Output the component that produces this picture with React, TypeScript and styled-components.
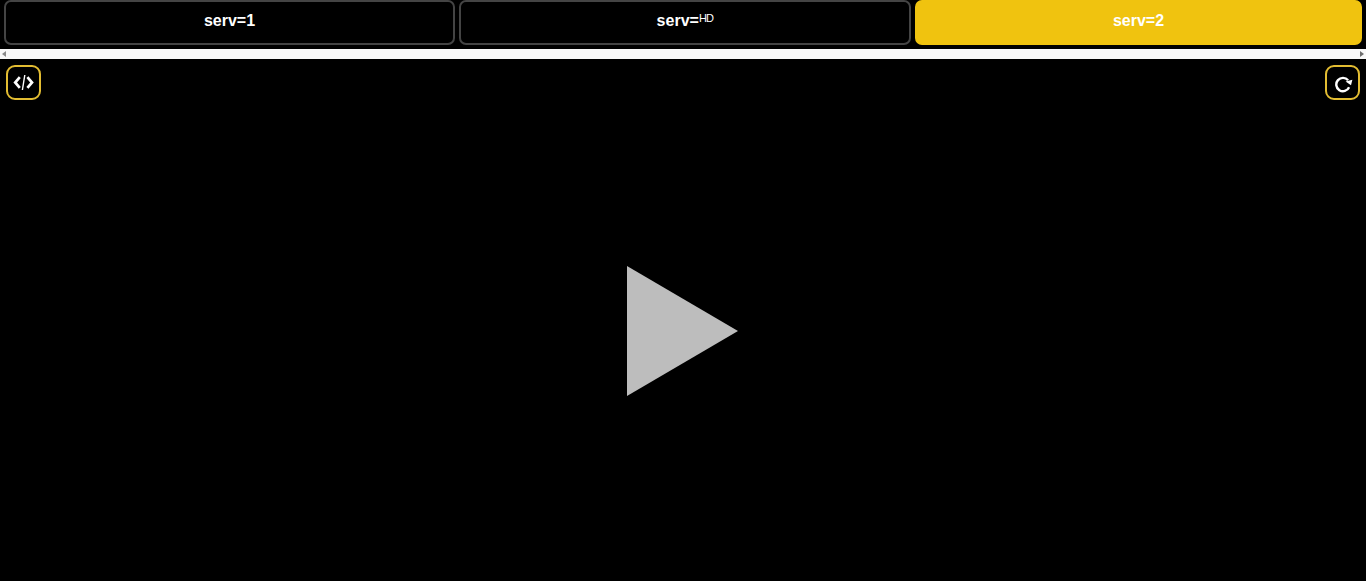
import React from "react";
import styled, { createGlobalStyle } from "styled-components";

const Global = createGlobalStyle`
  html, body { margin: 0; padding: 0; height: 100%; background: #000; overflow: hidden; }
  #root { height: 100%; }
`;

const Page = styled.div`
  display: flex;
  flex-direction: column;
  height: 581px;
  width: 1366px;
  background: #000;
  font-family: "Liberation Sans", Arial, sans-serif;
`;

const TabBar = styled.nav`
  display: grid;
  grid-template-columns: 451px 452px 447px;
  column-gap: 4px;
  padding: 0 4px;
  height: 45px;
  box-sizing: border-box;
  margin-bottom: 4px;
`;

const Tab = styled.button<{ $active?: boolean }>`
  display: flex;
  align-items: center;
  justify-content: center;
  height: 45px;
  padding: 0 0 3px;
  box-sizing: border-box;
  border: 2px solid ${(p) => (p.$active ? "#f0c30f" : "#444444")};
  border-radius: 7px;
  background: ${(p) => (p.$active ? "#f0c30f" : "#000")};
  color: #fff;
  font: bold 16px "Liberation Sans", Arial, sans-serif;
`;

const Sup = styled.sup`
  font-size: 11px;
  font-weight: 400;
  line-height: 0;
  position: relative;
  top: -3px;
  letter-spacing: -0.7px;
  align-self: center;
`;

const ScrollTrack = styled.div`
  display: flex;
  align-items: center;
  justify-content: space-between;
  height: 10px;
  padding: 0 2px;
  box-sizing: border-box;
  background: #f9f9f9;
`;

const Arrow = styled.span<{ $dir: "left" | "right" }>`
  width: 0;
  height: 0;
  border-top: 3.5px solid transparent;
  border-bottom: 3.5px solid transparent;
  ${(p) =>
    p.$dir === "left"
      ? "border-right: 4px solid #8a8a8a;"
      : "border-left: 4px solid #6e6e6e;"}
`;

const Player = styled.main`
  position: relative;
  flex: 1;
  display: grid;
  place-items: center;
  padding-top: 22px;
  box-sizing: border-box;
  background: #000;
`;

const PlayIcon = styled.svg`
  display: block;
  width: 111px;
  height: 130px;
  transform: translateX(-1px);
`;

const IconButton = styled.button<{ $side: "left" | "right" }>`
  position: absolute;
  top: 6px;
  ${(p) => (p.$side === "left" ? "left: 6px;" : "right: 6px;")}
  width: 35px;
  height: 35px;
  padding: 0;
  display: flex;
  align-items: center;
  justify-content: center;
  box-sizing: border-box;
  background: #000;
  border: 2px solid #e3bd32;
  border-radius: 9px;
`;

export default function App() {
  return (
    <Page>
      <Global />
      <TabBar>
        <Tab>serv=1</Tab>
        <Tab>
          serv=<Sup>HD</Sup>
        </Tab>
        <Tab $active>serv=2</Tab>
      </TabBar>
      <ScrollTrack>
        <Arrow $dir="left" />
        <Arrow $dir="right" />
      </ScrollTrack>
      <Player>
        <IconButton $side="left" aria-label="embed">
          <svg width="21" height="17" viewBox="0 0 21 17" fill="none" stroke="#fff" strokeWidth="2.7">
            <path d="M6.8 3.2 L2.2 8.5 L6.8 13.8" />
            <path d="M14.4 3.2 L19 8.5 L14.4 13.8" />
            <path d="M11.8 1 L9.4 16" strokeWidth="1.4" />
          </svg>
        </IconButton>
        <IconButton $side="right" aria-label="reload">
          <svg width="20" height="20" viewBox="0 0 20 20" fill="none">
            <path d="M16.1 14.3 A6.7 6.7 0 1 1 15.1 7.2" stroke="#fff" strokeWidth="2.4" />
            <path d="M12.6 8.4 L19.4 6.8 L18 12.2 Z" fill="#fff" />
          </svg>
        </IconButton>
        <PlayIcon viewBox="0 0 111 130">
          <polygon points="0,0 111,65 0,130" fill="#bdbdbd" />
        </PlayIcon>
      </Player>
    </Page>
  );
}
